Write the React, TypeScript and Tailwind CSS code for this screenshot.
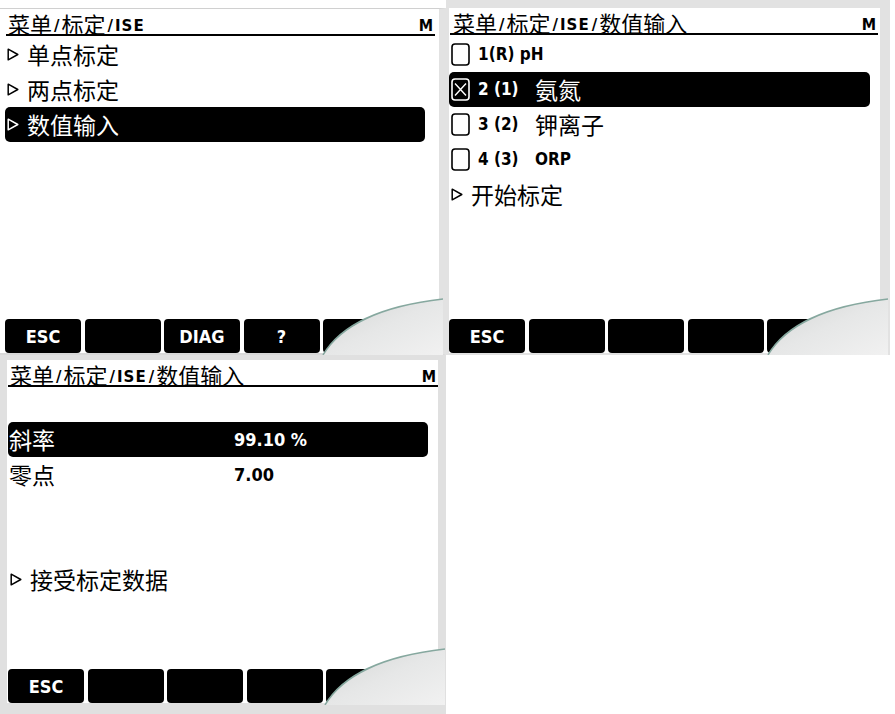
// Three captured LCD screens of the ISE calibration menu, laid out 2×2.

import type { ReactNode } from 'react';

const cjk = "font-['Noto_Sans_CJK_SC','Noto_Sans',sans-serif]";
const lat = "font-['DejaVu_Sans_Condensed','DejaVu_Sans',sans-serif] font-bold";
const latWide = "font-['DejaVu_Sans','Noto_Sans',sans-serif] font-bold";

function Tri() {
  return (
    <svg width="12" height="13" viewBox="0 0 12 13" className="shrink-0">
      <path
        d="M1.2 1.2 L10.8 6.5 L1.2 11.8 Z"
        fill="none"
        stroke="currentColor"
        strokeWidth="1.5"
        strokeLinejoin="round"
      />
    </svg>
  );
}

function Box({ checked }: { checked?: boolean }) {
  return (
    <svg width="19" height="23" viewBox="0 0 19 23" className="shrink-0">
      <rect x="1" y="1" width="17" height="21" rx="3" fill="none" stroke="currentColor" strokeWidth="1.6" />
      {checked && (
        <path d="M4 5.5 L15 17.5 M15 5.5 L4 17.5" stroke="currentColor" strokeWidth="1.4" />
      )}
    </svg>
  );
}

function Crumb({ parts }: { parts: string[] }) {
  return (
    <div className="flex items-end leading-none">
      {parts.map((p, i) => (
        <span key={i} className="flex items-end">
          {i > 0 && <span className={`${latWide} text-[15px] mx-[2px]`}>/</span>}
          {/^[A-Z]+$/.test(p) ? (
            <span className={`${latWide} text-[15px] tracking-[1px]`}>{p}</span>
          ) : (
            <span className={`${cjk} text-[22px]`}>{p}</span>
          )}
        </span>
      ))}
    </div>
  );
}

function Header({ parts, className }: { parts: string[]; className: string }) {
  return (
    <div className={`flex items-end justify-between h-[27px] border-b-2 border-black ${className}`}>
      <Crumb parts={parts} />
      <span className={`${lat} text-[16px] leading-none mr-[2px]`}>M</span>
    </div>
  );
}

function Row({ active, children }: { active?: boolean; children: ReactNode }) {
  return (
    <div
      className={`h-[35px] flex items-center ${active ? 'bg-black text-white rounded-[5px]' : 'text-black'}`}
    >
      {children}
    </div>
  );
}

function MenuItem({ text }: { text: string }) {
  return (
    <>
      <span className="ml-[2px] flex">
        <Tri />
      </span>
      <span className={`${cjk} text-[23px] leading-none ml-[8px]`}>{text}</span>
    </>
  );
}

function Keys({ labels, className }: { labels: string[]; className: string }) {
  return (
    <div className={`flex gap-[3.5px] ${className}`}>
      {labels.map((l, i) => (
        <div
          key={i}
          className={`w-[76px] h-[34px] shrink-0 bg-black rounded-[4px] flex items-center justify-center text-white ${lat} text-[18px]`}
        >
          {l}
        </div>
      ))}
    </div>
  );
}

function Curl({ id, className }: { id: string; className: string }) {
  return (
    <svg width="126" height="61" viewBox="0 0 126 61" className={`absolute ${className}`}>
      <defs>
        <linearGradient id={id} x1="0" y1="0" x2="1" y2="1">
          <stop offset="0" stopColor="#d3d5d4" />
          <stop offset="0.5" stopColor="#e6e7e7" />
          <stop offset="1" stopColor="#f1f1f1" />
        </linearGradient>
      </defs>
      <path d="M3 61 C20 32 60 12 123 5 L123 61 Z" fill={`url(#${id})`} />
      <path d="M3 61 C20 32 60 12 123 5" fill="none" stroke="#86a89f" strokeWidth="1.5" />
    </svg>
  );
}

function ScreenMenu() {
  return (
    <div className="relative w-[446px] h-[355px] bg-white pt-[8px]">
      <div className="h-full flex flex-col border-t border-r-[7px] border-b-2 border-t-[#d0d0d0] border-r-[#e2e2e2] border-b-[#d8d8d8] bg-white">
        <Header parts={['菜单', '标定', 'ISE']} className="ml-[6px] mr-[4px] pl-[2px]" />
        <div className="mt-[1px] ml-[5px] mr-[14px]">
          <Row>
            <MenuItem text="单点标定" />
          </Row>
          <Row>
            <MenuItem text="两点标定" />
          </Row>
          <Row active>
            <MenuItem text="数值输入" />
          </Row>
        </div>
        <div className="flex-1" />
        <Keys labels={['ESC', '', 'DIAG', '?', '']} className="ml-[5px]" />
      </div>
      <Curl id="curl1" className="left-[320px] top-[294px]" />
    </div>
  );
}

function Channel({ no, name, checked, active }: { no: string; name: string; checked?: boolean; active?: boolean }) {
  const latin = /^[A-Za-z]+$/.test(name);
  return (
    <Row active={active}>
      <span className="ml-[2px] flex">
        <Box checked={checked} />
      </span>
      <span className={`${lat} text-[17px] leading-none ml-[8px] w-[57px] shrink-0`}>{no}</span>
      <span className={latin ? `${lat} text-[17px] leading-none` : `${cjk} text-[23px] leading-none`}>
        {name}
      </span>
    </Row>
  );
}

function ScreenChannels() {
  return (
    <div className="relative w-[449px] h-[355px] bg-white pr-[5px]">
      <div className="h-full flex flex-col border-t-[8px] border-l-[3px] border-r-[10px] border-b-2 border-[#e2e2e2] bg-white">
        <Header parts={['菜单', '标定', 'ISE', '数值输入']} className="ml-[1px] mr-[2px] pl-[3px]" />
        <div className="mt-[2px] mr-[10px]">
          <Row>
            <span className="ml-[2px] flex">
              <Box />
            </span>
            <span className={`${lat} text-[17px] leading-none ml-[8px]`}>1(R) pH</span>
          </Row>
          <Channel no="2 (1)" name="氨氮" checked active />
          <Channel no="3 (2)" name="钾离子" />
          <Channel no="4 (3)" name="ORP" />
          <Row>
            <MenuItem text="开始标定" />
          </Row>
        </div>
        <div className="flex-1" />
        <Keys labels={['ESC', '', '', '', '']} className="ml-0" />
      </div>
      <Curl id="curl2" className="left-[319px] top-[294px]" />
    </div>
  );
}

function ValueRow({ label, value, active }: { label: string; value: string; active?: boolean }) {
  return (
    <Row active={active}>
      <span className={`${cjk} text-[23px] leading-none ml-[1px] w-[225px] shrink-0`}>{label}</span>
      <span className={`${lat} text-[18px] leading-none`}>{value}</span>
    </Row>
  );
}

function ScreenValues() {
  return (
    <div className="relative w-[446px] h-[359px] bg-white">
      <div className="h-full flex flex-col border-t-[5px] border-l-[7px] border-r-[8px] border-b-[11px] border-[#e0e0e0] bg-white">
        <Header parts={['菜单', '标定', 'ISE', '数值输入']} className="ml-[1px] mr-0 pl-[2px]" />
        <div className="ml-[1px] mr-[10px]">
          <div className="h-[35px]" />
          <ValueRow label="斜率" value="99.10 %" active />
          <ValueRow label="零点" value="7.00" />
          <div className="h-[70px]" />
          <Row>
            <MenuItem text="接受标定数据" />
          </Row>
        </div>
        <div className="flex-1" />
        <Keys labels={['ESC', '', '', '', '']} className="ml-[1px]" />
      </div>
      <Curl id="curl3" className="left-[322px] top-[289px]" />
    </div>
  );
}

export default function App() {
  return (
    <div className="w-[895px] h-[714px] bg-white overflow-hidden grid grid-cols-[446px_449px] grid-rows-[355px_359px]">
      <ScreenMenu />
      <ScreenChannels />
      <ScreenValues />
      <div className="bg-white" />
    </div>
  );
}
